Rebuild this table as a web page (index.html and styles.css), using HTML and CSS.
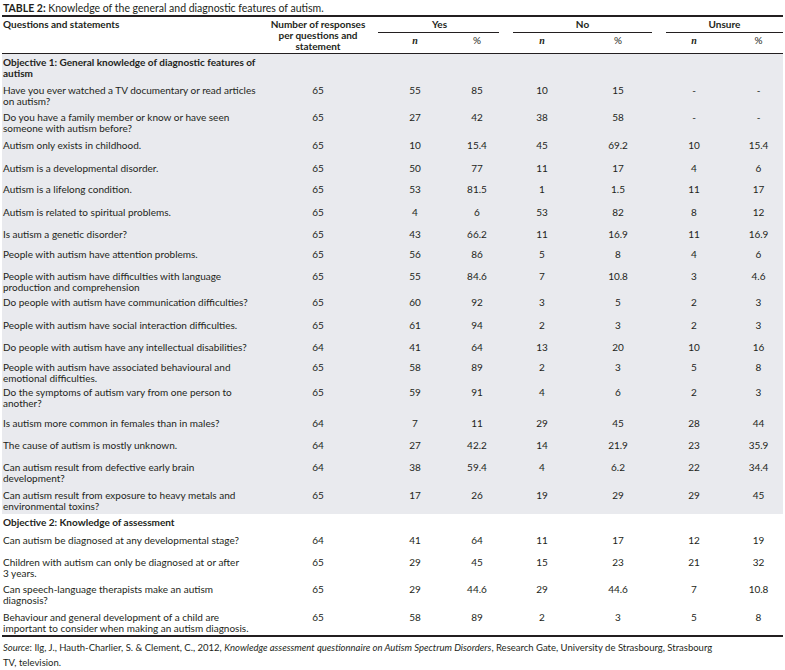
FILE: index.html
```html
<!DOCTYPE html>
<html lang="en">
<head>
<meta charset="utf-8">
<title>Table 2</title>
<link rel="stylesheet" href="styles.css">
</head>
<body>
<div class="page">
  <div class="title"><b>TABLE 2:</b> Knowledge of the general and diagnostic features of autism.</div>
  <table class="data">
    <colgroup>
      <col class="c-q"><col class="c-num"><col class="c-yn"><col class="c-yp"><col class="c-nn"><col class="c-np"><col class="c-un"><col class="c-up">
    </colgroup>
    <thead>
      <tr class="hr1">
        <th rowspan="2" class="th-q">Questions and statements</th>
        <th rowspan="2" class="th-num">Number of responses<br>per questions and<br>statement</th>
        <th colspan="2" class="th-grp"><div class="grp grp-yes">Yes</div></th>
        <th colspan="2" class="th-grp"><div class="grp grp-no">No</div></th>
        <th colspan="2" class="th-grp"><div class="grp grp-un">Unsure</div></th>
      </tr>
      <tr class="hr2">
        <th class="th-sub"><span class="n">n</span></th>
        <th class="th-sub">%</th>
        <th class="th-sub"><span class="n">n</span></th>
        <th class="th-sub">%</th>
        <th class="th-sub"><span class="n">n</span></th>
        <th class="th-sub">%</th>
      </tr>
    </thead>
    <tbody class="shade">
      <tr class="h28 obj"><td colspan="8">Objective 1: General knowledge of diagnostic features of<br>autism</td></tr>
      <tr class="h27"><td>Have you ever watched a TV documentary or read articles<br>on autism?</td><td>65</td><td>55</td><td>85</td><td>10</td><td>15</td><td>-</td><td>-</td></tr>
      <tr class="h28"><td>Do you have a family member or know or have seen<br>someone with autism before?</td><td>65</td><td>27</td><td>42</td><td>38</td><td>58</td><td>-</td><td>-</td></tr>
      <tr class="h23"><td>Autism only exists in childhood.</td><td>65</td><td>10</td><td>15.4</td><td>45</td><td>69.2</td><td>10</td><td>15.4</td></tr>
      <tr class="h21"><td>Autism is a developmental disorder.</td><td>65</td><td>50</td><td>77</td><td>11</td><td>17</td><td>4</td><td>6</td></tr>
      <tr class="h23"><td>Autism is a lifelong condition.</td><td>65</td><td>53</td><td>81.5</td><td>1</td><td>1.5</td><td>11</td><td>17</td></tr>
      <tr class="h22"><td>Autism is related to spiritual problems.</td><td>65</td><td>4</td><td>6</td><td>53</td><td>82</td><td>8</td><td>12</td></tr>
      <tr class="h20"><td>Is autism a genetic disorder?</td><td>65</td><td>43</td><td>66.2</td><td>11</td><td>16.9</td><td>11</td><td>16.9</td></tr>
      <tr class="h22"><td>People with autism have attention problems.</td><td>65</td><td>56</td><td>86</td><td>5</td><td>8</td><td>4</td><td>6</td></tr>
      <tr class="h26"><td>People with autism have difficulties with language<br>production and comprehension</td><td>65</td><td>55</td><td>84.6</td><td>7</td><td>10.8</td><td>3</td><td>4.6</td></tr>
      <tr class="h23"><td>Do people with autism have communication difficulties?</td><td>65</td><td>60</td><td>92</td><td>3</td><td>5</td><td>2</td><td>3</td></tr>
      <tr class="h22"><td>People with autism have social interaction difficulties.</td><td>65</td><td>61</td><td>94</td><td>2</td><td>3</td><td>2</td><td>3</td></tr>
      <tr class="h20"><td>Do people with autism have any intellectual disabilities?</td><td>64</td><td>41</td><td>64</td><td>13</td><td>20</td><td>10</td><td>16</td></tr>
      <tr class="h25"><td>People with autism have associated behavioural and<br>emotional difficulties.</td><td>65</td><td>58</td><td>89</td><td>2</td><td>3</td><td>5</td><td>8</td></tr>
      <tr class="h31"><td>Do the symptoms of autism vary from one person to<br>another?</td><td>65</td><td>59</td><td>91</td><td>4</td><td>6</td><td>2</td><td>3</td></tr>
      <tr class="h22"><td>Is autism more common in females than in males?</td><td>64</td><td>7</td><td>11</td><td>29</td><td>45</td><td>28</td><td>44</td></tr>
      <tr class="h22"><td>The cause of autism is mostly unknown.</td><td>64</td><td>27</td><td>42.2</td><td>14</td><td>21.9</td><td>23</td><td>35.9</td></tr>
      <tr class="h28"><td>Can autism result from defective early brain<br>development?</td><td>64</td><td>38</td><td>59.4</td><td>4</td><td>6.2</td><td>22</td><td>34.4</td></tr>
      <tr class="h27"><td>Can autism result from exposure to heavy metals and<br>environmental toxins?</td><td>65</td><td>17</td><td>26</td><td>19</td><td>29</td><td>29</td><td>45</td></tr>
    </tbody>
    <tbody class="plain">
      <tr class="h18 obj"><td colspan="8">Objective 2: Knowledge of assessment</td></tr>
      <tr class="h22"><td>Can autism be diagnosed at any developmental stage?</td><td>64</td><td>41</td><td>64</td><td>11</td><td>17</td><td>12</td><td>19</td></tr>
      <tr class="h27"><td>Children with autism can only be diagnosed at or after<br>3&nbsp;years.</td><td>65</td><td>29</td><td>45</td><td>15</td><td>23</td><td>21</td><td>32</td></tr>
      <tr class="h28"><td>Can speech-language therapists make an autism<br>diagnosis?</td><td>65</td><td>29</td><td>44.6</td><td>29</td><td>44.6</td><td>7</td><td>10.8</td></tr>
      <tr class="h26"><td>Behaviour and general development of a child are<br>important to consider when making an autism diagnosis.</td><td>65</td><td>58</td><td>89</td><td>2</td><td>3</td><td>5</td><td>8</td></tr>
    </tbody>
  </table>
  <div class="notes">
    <p><i>Source</i>: Ilg, J., Hauth-Charlier, S. &amp; Clement, C., 2012, <i>Knowledge assessment questionnaire on Autism Spectrum Disorders</i>, Research Gate, University de Strasbourg, Strasbourg</p>
    <p>TV, television.</p>
  </div>
</div>
</body>
</html>
```
FILE: styles.css
```css
* { box-sizing: border-box; }
html, body { margin: 0; padding: 0; background: #ffffff; }
body {
  font-family: Lato, "Liberation Sans", sans-serif;
  color: #231f20;
  font-size: 10px;
  line-height: 11px;
}
.page { padding: 0 2px 0 2px; width: 785px; }
.title {
  font-size: 10.5px;
  line-height: 14px;
  padding: 1px 0 0 1px;
  height: 15px;
}
.title b { font-weight: 700; }

.data {
  width: 781px;
  table-layout: fixed;
  border-collapse: separate;
  border-spacing: 0;
  border-top: 2px solid #231f20;
  border-bottom: 2px solid #231f20;
}
.c-q { width: 256px; }
.c-num { width: 120px; }
.c-yn { width: 74px; }
.c-yp { width: 50px; }
.c-nn { width: 80px; }
.c-np { width: 72px; }
.c-un { width: 80px; }
.c-up { width: 49px; }

th {
  font-weight: 700;
  vertical-align: top;
  padding: 2px 0 0;
  text-align: center;
}
.th-q, .th-num, .th-sub { border-bottom: 1px solid #231f20; }
.th-q { text-align: left; padding-left: 1px; }
.hr1 { height: 16px; }
.hr2 { height: 21px; }
.th-grp { padding: 2px 0 0; }
.grp { border-bottom: 1px solid #231f20; height: 14px; }
.grp-yes { margin-right: 3px; padding-left: 2px; }
.grp-no { margin-left: 11px; margin-right: 2px; }
.grp-un { margin-left: 12px; }
.th-sub { padding-top: 2px; font-weight: 400; }
.n { font-family: "Liberation Serif", serif; font-style: italic; font-weight: 700; font-size: 10px; }

td {
  vertical-align: top;
  padding: 3px 0 0;
  text-align: center;
  white-space: nowrap;
}
td:first-child { text-align: left; padding-left: 1px; padding-right: 2px; }
.obj td { font-weight: 700; }
.shade td { background: #e9eaee; }

.h18 { height: 18px; }
.h20 { height: 20px; }
.h21 { height: 21px; }
.h22 { height: 22px; }
.h23 { height: 23px; }
.h25 { height: 25px; }
.h26 { height: 26px; }
.h27 { height: 27px; }
.h28 { height: 28px; }
.h31 { height: 31px; }

.notes { padding: 3px 0 0 1px; font-size: 9.5px; line-height: 15px; }
.notes p { margin: 0; }
```
